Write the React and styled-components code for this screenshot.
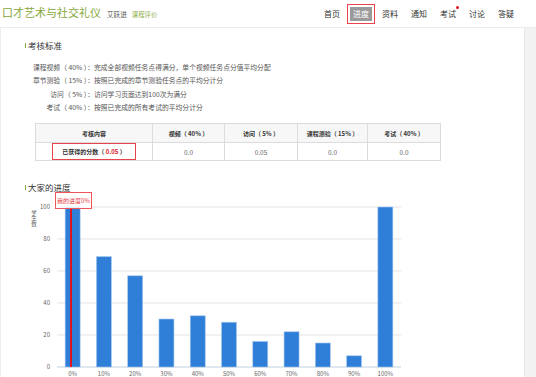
import React from 'react';
import styled, { createGlobalStyle } from 'styled-components';

const GlobalStyle = createGlobalStyle`
  html, body {
    margin: 0;
    padding: 0;
    background: #fff;
    overflow: hidden;
    font-family: "Noto Sans CJK SC", "Noto Sans", sans-serif;
  }
`;

const navItems = ['首页', '进度', '资料', '通知', '考试', '讨论', '答疑'];

const criteria = [
  { label: '课程视频（ 40% ）：', text: '完成全部视频任务点得满分，单个视频任务点分值平均分配' },
  { label: '章节测验（ 15% ）：', text: '按照已完成的章节测验任务点的平均分计分' },
  { label: '访问（ 5% ）：', text: '访问学习页面达到100次为满分' },
  { label: '考试（ 40% ）：', text: '按照已完成的所有考试的平均分计分' },
];

const columns = [
  { head: '考核内容', width: 117 },
  { head: '视频（ 40% ）', width: 72, value: '0.0' },
  { head: '访问（ 5% ）', width: 73, value: '0.05' },
  { head: '课程测验（ 15% ）', width: 70, value: '0.0' },
  { head: '考试（ 40% ）', width: 73, value: '0.0' },
];

const bars = [
  { label: '0%', value: 100 },
  { label: '10%', value: 69 },
  { label: '20%', value: 57 },
  { label: '30%', value: 30 },
  { label: '40%', value: 32 },
  { label: '50%', value: 28 },
  { label: '60%', value: 16 },
  { label: '70%', value: 22 },
  { label: '80%', value: 15 },
  { label: '90%', value: 7 },
  { label: '100%', value: 100 },
];

const ProgressChart = () => {
  const left = 29;
  const right = 373;
  const top = 15;
  const bottom = 175;
  const step = (right - left) / bars.length;
  const scale = (bottom - top) / 100;
  const ticks = [0, 20, 40, 60, 80, 100];
  return (
    <ChartSvg width="410" height="190" viewBox="0 0 410 190">
      {ticks.map((t) => {
        const y = bottom - t * scale;
        return (
          <g key={t}>
            <line x1={left} x2={right} y1={y} y2={y} stroke={t === 0 ? '#c0d0e0' : '#e3e3e3'} strokeWidth="1" />
            <text x="22" y={y + 2} textAnchor="end" fontSize="6" fill="#666">{t}</text>
          </g>
        );
      })}
      <text x="6" y="18" fontSize="5.5" fill="#666" writingMode="tb">学生数</text>
      {bars.map((b, i) => {
        const cx = left + step * (i + 0.5);
        const h = b.value * scale;
        return (
          <g key={b.label}>
            <rect x={cx - 7.5} y={bottom - h} width="15" height={h} fill="#2f7ed8" stroke="#a9c8ee" strokeWidth="0.6" />
            <text x={cx} y="184" textAnchor="middle" fontSize="6" fill="#666">{b.label}</text>
          </g>
        );
      })}
      <line x1="43" x2="43" y1="17" y2={bottom} stroke="#e0141e" strokeWidth="2" />
      <rect x="27.5" y="0.5" width="36" height="16" fill="#fff" fillOpacity="0.85" stroke="#f0545a" strokeWidth="1" />
      <text x="45.5" y="11" textAnchor="middle" fontSize="6" fill="#e8383d">我的进度0%</text>
    </ChartSvg>
  );
};

export default function App() {
  return (
    <Page>
      <GlobalStyle />
      <Header>
        <Brand>
          <CourseTitle>口才艺术与社交礼仪</CourseTitle>
          <Teacher>艾跃进</Teacher>
          <Review>课程评价</Review>
        </Brand>
        <Nav>
          {navItems.map((item) => (
            <NavItem key={item} $active={item === '进度'} $dot={item === '考试'}>
              {item}
            </NavItem>
          ))}
        </Nav>
      </Header>
      <Body>
        <Main>
          <SectionTitle>考核标准</SectionTitle>
          <CriteriaList>
            {criteria.map((c) => (
              <React.Fragment key={c.label}>
                <CriteriaLabel>{c.label}</CriteriaLabel>
                <CriteriaText>{c.text}</CriteriaText>
              </React.Fragment>
            ))}
          </CriteriaList>
          <ScoreTable>
            <colgroup>
              {columns.map((c) => (
                <col key={c.head} style={{ width: c.width }} />
              ))}
            </colgroup>
            <thead>
              <tr>
                {columns.map((c) => (
                  <HeadCell key={c.head}>{c.head}</HeadCell>
                ))}
              </tr>
            </thead>
            <tbody>
              <tr>
                <Cell>
                  <ScoreBox>
                    已获得的分数（ <Score>0.05</Score> ）
                  </ScoreBox>
                </Cell>
                {columns.slice(1).map((c) => (
                  <Cell key={c.head}>{c.value}</Cell>
                ))}
              </tr>
            </tbody>
          </ScoreTable>
          <SectionTitle $chart>大家的进度</SectionTitle>
          <ProgressChart />
        </Main>
        <Side />
      </Body>
    </Page>
  );
}

const Page = styled.div`
  width: 536px;
  height: 377px;
  display: flex;
  flex-direction: column;
  overflow: hidden;
`;

const Header = styled.div`
  height: 27px;
  flex-shrink: 0;
  display: flex;
  align-items: center;
  justify-content: space-between;
  border-bottom: 1px solid #ececec;
  padding: 0 22px 0 2px;
`;

const Brand = styled.div`
  display: flex;
  align-items: baseline;
  margin-top: -3px;
`;

const CourseTitle = styled.span`
  font-size: 11px;
  color: #86a83a;
`;

const Teacher = styled.span`
  font-size: 6.6px;
  color: #555;
  margin-left: 6px;
`;

const Review = styled.span`
  font-size: 6.4px;
  color: #8fb04a;
  margin-left: 5px;
`;

const Nav = styled.div`
  display: flex;
  align-items: center;
  gap: 13px;
`;

const NavItem = styled.span`
  position: relative;
  font-size: 8px;
  line-height: 12px;
  color: ${(p) => (p.$active ? '#fff' : '#333')};
  background: ${(p) => (p.$active ? '#9a9a9a' : 'transparent')};
  padding: ${(p) => (p.$active ? '1px 3px' : '0')};
  margin: ${(p) => (p.$active ? '0 -3px' : '0')};
  outline: ${(p) => (p.$active ? '1px solid #e8434a' : 'none')};
  outline-offset: 2px;

  &::after {
    content: '';
    display: ${(p) => (p.$dot ? 'block' : 'none')};
    position: absolute;
    right: -3px;
    top: -2px;
    width: 3px;
    height: 3px;
    border-radius: 50%;
    background: #e0141e;
  }
`;

const Body = styled.div`
  flex: 1;
  display: flex;
  min-height: 0;
`;

const Main = styled.div`
  flex: 1;
  border-left: 1px solid #eeeeee;
  padding: 11px 0 0 24px;
  display: flex;
  flex-direction: column;
  align-items: flex-start;
  overflow: hidden;
`;

const Side = styled.div`
  width: 11px;
  background: #f2f2f2;
  border-left: 1px solid #e6e6e6;
`;

const SectionTitle = styled.div`
  flex-shrink: 0;
  font-size: 8.5px;
  line-height: 12px;
  color: #333;
  display: flex;
  align-items: center;
  margin-top: ${(p) => (p.$chart ? '20px' : '0')};

  &::before {
    content: '';
    width: 1px;
    height: 5px;
    background: #86a83a;
    margin-right: 2px;
  }
`;

const CriteriaList = styled.div`
  flex-shrink: 0;
  display: grid;
  grid-template-columns: 69px auto;
  margin: 10px 0 0 0;
  font-size: 6.8px;
  line-height: 13.3px;
  color: #555;
`;

const CriteriaLabel = styled.span`
  text-align: right;
`;

const CriteriaText = styled.span`
  white-space: nowrap;
`;

const ScoreTable = styled.table`
  flex-shrink: 0;
  margin: 9px 0 0 10px;
  border-collapse: collapse;
  table-layout: fixed;
  width: 405px;
  font-size: 6px;
  color: #333;
`;

const HeadCell = styled.th`
  height: 18px;
  padding: 0;
  background: #f7f7f7;
  border: 1px solid #dcdcdc;
  font-weight: bold;
  text-align: center;
`;

const Cell = styled.td`
  height: 17px;
  padding: 0;
  border: 1px solid #dcdcdc;
  text-align: center;
  font-size: 6.5px;
  color: #666;
`;

const ScoreBox = styled.span`
  display: inline-block;
  width: 78px;
  padding: 3px 2px;
  border: 1.5px solid #e8434a;
  font-weight: bold;
  color: #333;
  font-size: 6px;
`;

const Score = styled.span`
  color: #e0141e;
`;

const ChartSvg = styled.svg`
  display: block;
  flex-shrink: 0;
  margin: -1px 0 0 3px;
  font-family: "Noto Sans CJK SC", "Noto Sans", sans-serif;
`;
